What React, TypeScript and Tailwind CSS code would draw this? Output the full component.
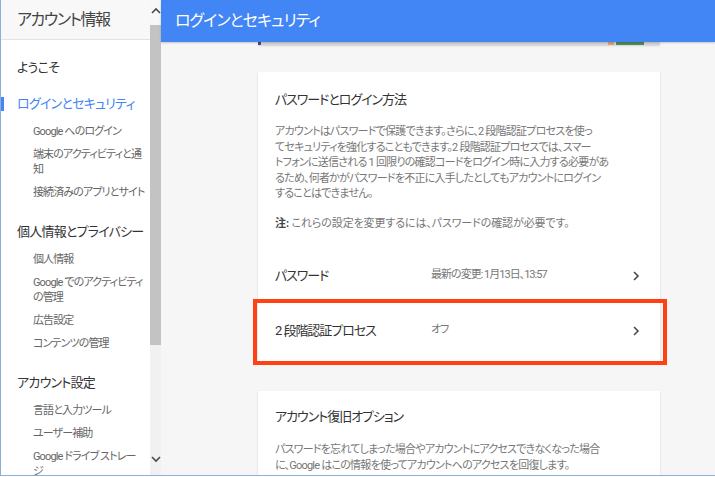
import React from 'react';

const font = "font-[Roboto,'Noto_Sans_CJK_JP',sans-serif] [font-feature-settings:'palt']";

const Chevron = ({ dir }: { dir: 'right' | 'up' | 'down' }) => {
  const pts =
    dir === 'right' ? '2,1 6,5 2,9' : dir === 'up' ? '1,6 5,2 9,6' : '1,2 5,6 9,2';
  const size = dir === 'right' ? { w: 8, h: 10 } : { w: 10, h: 8 };
  return (
    <svg width={size.w} height={size.h} viewBox={`0 0 ${size.w} ${size.h}`} className="shrink-0">
      <polyline points={pts} fill="none" stroke="#4a4a4a" strokeWidth="1.6" />
    </svg>
  );
};

type NavSection = { title: string; active?: boolean; items: string[][] };

const sections: NavSection[] = [
  {
    title: 'ログインとセキュリティ',
    active: true,
    items: [['Google へのログイン'], ['端末のアクティビティと通', '知'], ['接続済みのアプリとサイト']],
  },
  {
    title: '個人情報とプライバシー',
    items: [['個人情報'], ['Google でのアクティビティ', 'の管理'], ['広告設定'], ['コンテンツの管理']],
  },
  {
    title: 'アカウント設定',
    items: [['言語と入力ツール'], ['ユーザー補助'], ['Google ドライブ ストレー', 'ジ']],
  },
];

function Sidebar() {
  return (
    <aside className="flex w-[160px] shrink-0 bg-white">
      <div className="flex w-[149px] flex-col overflow-hidden">
        <div className="flex h-[40px] shrink-0 items-center border-b border-[#e3e3e3] bg-[#f8f8f8] pl-[16px] text-[16px] tracking-[-0.09em] text-[#444]">
          アカウント情報
        </div>
        <div className="pl-[16px] pt-[18px]">
          <div className="text-[13px] leading-[20px] tracking-[-0.06em] text-[#333]">ようこそ</div>
          {sections.map((s, i) => (
            <div key={s.title} className={i === 0 ? 'mt-[16px]' : 'mt-[22px]'}>
              <div
                className={
                  'relative whitespace-nowrap text-[13px] leading-[20px] tracking-[-0.06em] ' +
                  (s.active ? 'text-[#4285f4]' : 'text-[#333]')
                }
              >
                {s.active && <span className="absolute -left-[16px] top-[3px] h-[14px] w-[3px] bg-[#4285f4]" />}
                {s.title}
              </div>
              <div className="mt-[10px] flex flex-col gap-[8px] pl-[16px]">
                {s.items.map((lines) => (
                  <div
                    key={lines.join('')}
                    className="whitespace-nowrap text-[11px] leading-[15px] tracking-[-0.08em] text-[#666]"
                  >
                    {lines.map((l, j) => (
                      <div key={j}>{l}</div>
                    ))}
                  </div>
                ))}
              </div>
            </div>
          ))}
        </div>
      </div>
      <div className="flex w-[11px] flex-col items-center bg-[#f1f1f1]">
        <div className="flex h-[25px] w-full items-center justify-center bg-[#f7f7f7] pb-[4px]">
          <Chevron dir="up" />
        </div>
        <div className="h-[320px] w-full bg-[#c3c3c3]" />
        <div className="flex-1" />
        <div className="flex h-[30px] items-start justify-center pt-[10px]">
          <Chevron dir="down" />
        </div>
      </div>
    </aside>
  );
}

function Row({ label, value, highlight }: { label: string; value: string; highlight?: boolean }) {
  return (
    <div className="relative flex h-[55px] items-center pl-[17px] pr-[20px]">
      {highlight && (
        <div className="pointer-events-none absolute -bottom-[7px] -left-[5px] -right-[7px] -top-[4px] border-[4px] border-[#ff4013]" />
      )}
      <div className="w-[156px] text-[13px] tracking-[-0.08em] text-[#333]">{label}</div>
      <div className="flex-1 text-[11px] tracking-[-0.09em] text-[#777]">{value}</div>
      <Chevron dir="right" />
    </div>
  );
}

function Main() {
  return (
    <main className="flex min-w-0 flex-1 flex-col bg-[#f6f6f6]">
      <header className="relative z-10 flex h-[42px] shrink-0 items-center bg-[#4285f4] pl-[14px] text-[16px] tracking-[-0.06em] text-white shadow-[0_1px_2px_rgba(0,0,0,0.2)]">
        ログインとセキュリティ
      </header>
      <div className="ml-[97px] flex h-[3px] w-[402px] bg-[#d6d6d6] shadow-[0_1px_2px_rgba(0,0,0,0.15)]">
        <span className="w-[3px] bg-[#3a4f8f]" />
        <span className="flex-1" />
        <span className="w-[6px] bg-[#d9a27a]" />
        <span className="ml-[2px] w-[28px] bg-[#4f8a5a]" />
        <span className="w-[16px]" />
      </div>
      <div className="ml-[97px] mt-[27px] w-[402px] bg-white pb-[3px] shadow-[0_1px_2px_rgba(0,0,0,0.14)]">
        <div className="px-[17px] pt-[18px]">
          <div className="text-[13px] leading-[20px] tracking-[-0.08em] text-[#333]">パスワードとログイン方法</div>
          <div className="mt-[14px] whitespace-nowrap text-[11px] leading-[15.5px] tracking-[-0.07em] text-[#777]">
            <div>アカウントはパスワードで保護できます。さらに、2 段階認証プロセスを使っ</div>
            <div>てセキュリティを強化することもできます。2 段階認証プロセスでは、スマー</div>
            <div>トフォンに送信される 1 回限りの確認コードをログイン時に入力する必要があ</div>
            <div>るため、何者かがパスワードを不正に入手したとしてもアカウントにログイン</div>
            <div>することはできません。</div>
          </div>
          <div className="mt-[14px] whitespace-nowrap text-[11px] leading-[15.5px] tracking-[-0.01em] text-[#777]">
            <span className="font-bold text-[#444]">注:</span> これらの設定を変更するには、パスワードの確認が必要です。
          </div>
        </div>
        <div className="mt-[17px]">
          <Row label="パスワード" value="最新の変更: 1月13日、13:57" />
          <Row label="2 段階認証プロセス" value="オフ" highlight />
        </div>
      </div>
      <div className="ml-[97px] mt-[30px] w-[402px] flex-1 bg-white px-[17px] pt-[16px] shadow-[0_1px_2px_rgba(0,0,0,0.14)]">
        <div className="text-[13px] leading-[20px] tracking-[-0.08em] text-[#333]">アカウント復旧オプション</div>
        <div className="mt-[15px] whitespace-nowrap text-[11px] leading-[16px] tracking-[-0.07em] text-[#777]">
          <div>パスワードを忘れてしまった場合やアカウントにアクセスできなくなった場合</div>
          <div>に、Google はこの情報を使ってアカウントへのアクセスを回復します。</div>
        </div>
      </div>
    </main>
  );
}

export default function App() {
  return (
    <div className={`flex h-[476px] w-[715px] overflow-hidden border-b border-l border-[#8db0d6] bg-white ${font}`}>
      <Sidebar />
      <Main />
    </div>
  );
}
